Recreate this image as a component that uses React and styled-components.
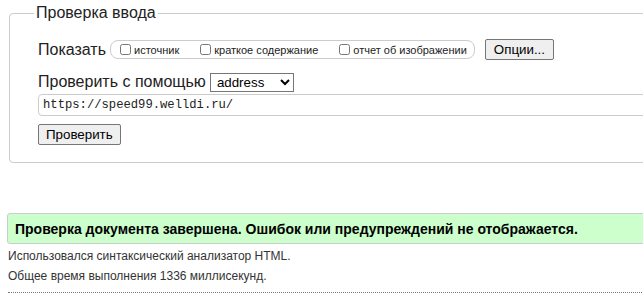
import React from "react";
import styled, { createGlobalStyle } from "styled-components";

const GlobalStyle = createGlobalStyle`
  html, body {
    margin: 0;
    padding: 0;
    background: #fff;
    overflow: hidden;
  }
  body {
    font-family: "Liberation Sans", Arial, sans-serif;
    color: #222;
  }
`;

const Page = styled.div`
  width: 720px;
  padding: 0 0 0 8px;
`;

const Form = styled.fieldset`
  margin: 4px 0 0 1px;
  padding: 17px 28px 17px 28px;
  border: 1px solid #ccc;
  border-radius: 4px;
  min-width: 0;
`;

const Legend = styled.legend`
  margin-left: -4px;
  padding: 0 2px;
  font-size: 16px;
  line-height: 18px;
  color: #222;
`;

const Row = styled.div`
  display: flex;
  align-items: center;
  min-height: 20px;
  margin-bottom: ${(p) => p.$mb || 0}px;
`;

const Label = styled.span`
  font-size: 16px;
  line-height: 20px;
  margin-right: ${(p) => p.$mr || 0}px;
`;

const ShowGroup = styled.div`
  display: flex;
  align-items: center;
  height: 17px;
  border: 1px solid #ccc;
  border-radius: 8px;
  padding: 0 7px 0 9px;
  gap: 21px;
`;

const Check = styled.label`
  display: flex;
  align-items: center;
  font-size: 11px;
  color: #222;
`;

const Box = styled.input.attrs({ type: "checkbox" })`
  width: 11px;
  height: 11px;
  margin: 0 3px 0 0;
`;

const Button = styled.button`
  font-family: "Liberation Sans", Arial, sans-serif;
  font-size: 13.33px;
  height: 21px;
  padding: 0 ${(p) => p.$px || 7}px;
  border: 1px solid #767676;
  border-radius: 2px;
  background: #efefef;
  color: #000;
  margin-left: ${(p) => p.$ml || 0}px;
`;

const Select = styled.select`
  font-family: "Liberation Sans", Arial, sans-serif;
  font-size: 13.33px;
  width: 84px;
  height: 19px;
  padding: 0 0 0 2px;
  border: 1px solid #767676;
  border-radius: 0;
  background: #fff;
  color: #000;
`;

const UrlInput = styled.input`
  display: block;
  box-sizing: border-box;
  width: 640px;
  height: 22px;
  padding: 0 4px;
  border: 1px solid #ccc;
  border-radius: 4px;
  font-family: "Liberation Mono", "DejaVu Sans Mono", monospace;
  font-size: 12.2px;
  color: #222;
  margin-bottom: 8px;
`;

const Result = styled.div`
  margin: 50px 0 0 -1px;
  height: 29px;
  display: flex;
  align-items: center;
  padding-left: 7px;
  background: #ccffcc;
  border: 1px solid #ccc;
  border-radius: 3px;
  font-size: 14px;
  font-weight: bold;
  color: #000;
`;

const Note = styled.p`
  margin: ${(p) => p.$mt || 0}px 0 0;
  font-size: 12px;
  line-height: 14px;
  color: #333;
`;

const Rule = styled.hr`
  margin: 9px 0 0;
  border: none;
  border-top: 1px dotted #777;
`;

export default function App() {
  return (
    <Page>
      <GlobalStyle />
      <Form>
        <Legend>Проверка ввода</Legend>
        <Row $mb={12}>
          <Label $mr={4}>Показать</Label>
          <ShowGroup>
            <Check>
              <Box />
              источник
            </Check>
            <Check>
              <Box />
              краткое содержание
            </Check>
            <Check>
              <Box />
              отчет об изображении
            </Check>
          </ShowGroup>
          <Button $ml={10} $px={8}>Опции...</Button>
        </Row>
        <Row $mb={2}>
          <Label $mr={4}>Проверить с помощью</Label>
          <Select defaultValue="address">
            <option value="address">address</option>
            <option value="file">file upload</option>
            <option value="text">text input</option>
          </Select>
        </Row>
        <UrlInput defaultValue="https://speed99.welldi.ru/" />
        <Button>Проверить</Button>
      </Form>
      <Result>Проверка документа завершена. Ошибок или предупреждений не отображается.</Result>
      <Note $mt={5}>Использовался синтаксический анализатор HTML.</Note>
      <Note $mt={6}>Общее время выполнения 1336 миллисекунд.</Note>
      <Rule />
    </Page>
  );
}
